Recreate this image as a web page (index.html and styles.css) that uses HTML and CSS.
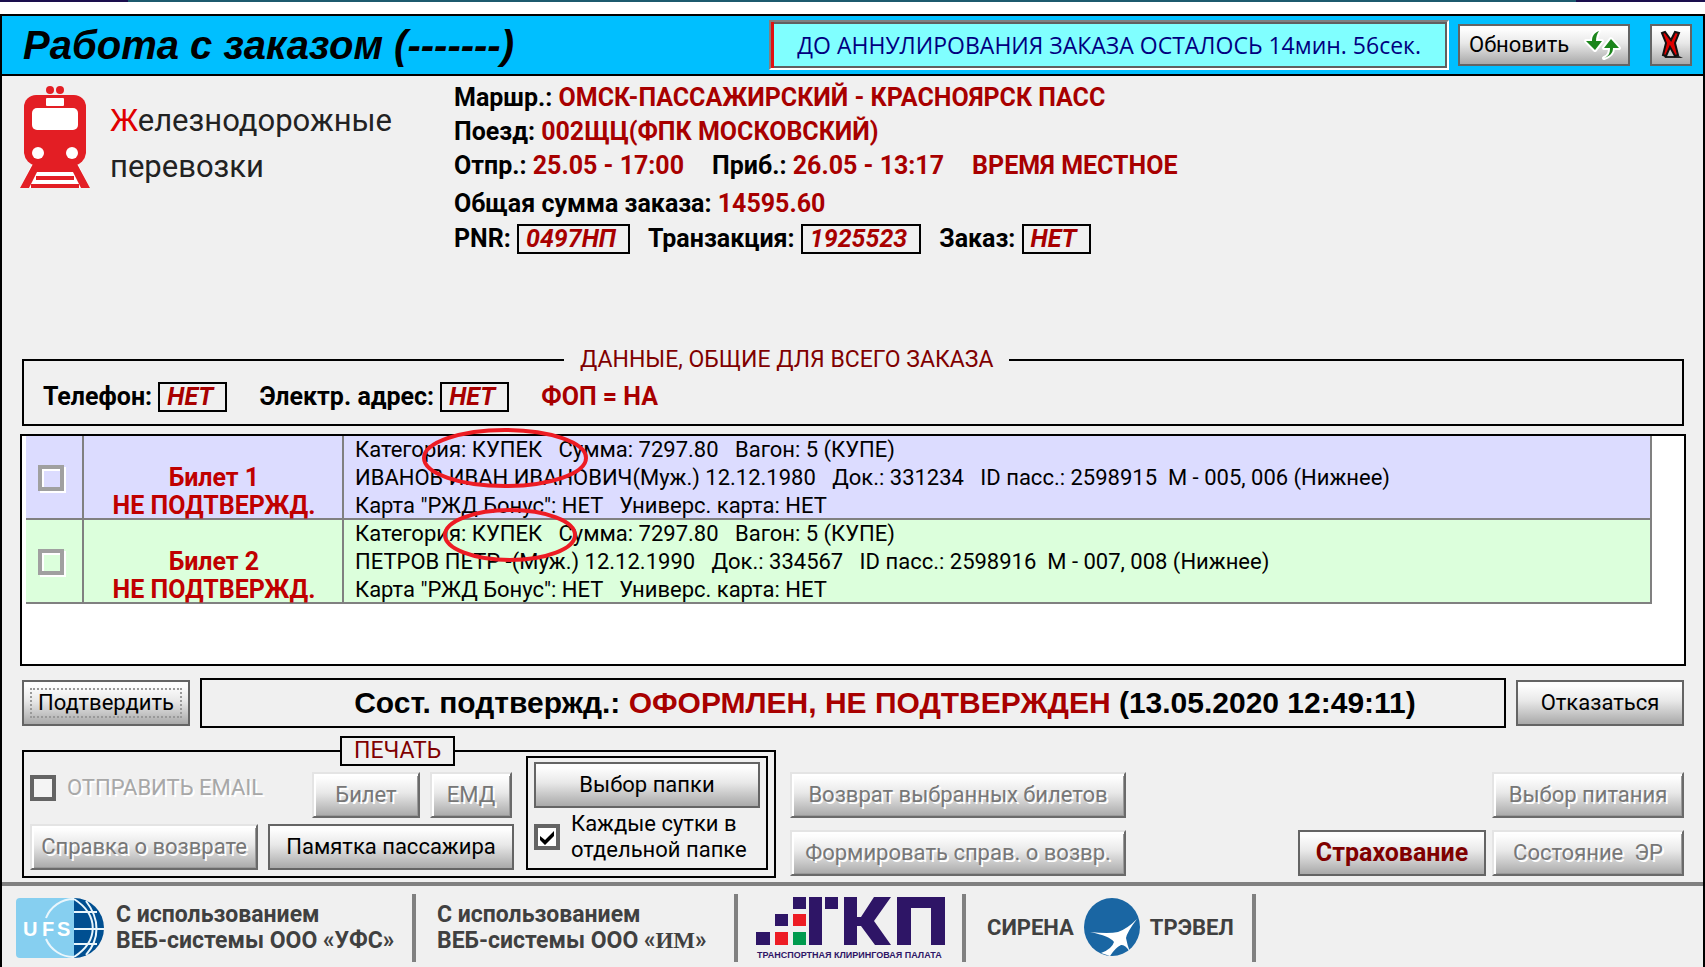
FILE: index.html
```html
<!DOCTYPE html>
<html lang="ru">
<head>
<meta charset="utf-8">
<title>Работа с заказом</title>
<link rel="stylesheet" href="styles.css">
</head>
<body>
<div class="strip"></div>
<main class="window">
  <header class="titlebar">
    <h1 class="title">Работа с заказом (-------)</h1>
    <output class="timer">ДО АННУЛИРОВАНИЯ ЗАКАЗА ОСТАЛОСЬ 14мин. 56сек.</output>
    <button class="btn refresh" type="button">Обновить
      <svg class="refresh-icon" width="34" height="32" viewBox="0 0 34 32" aria-hidden="true">
        <g fill="#1c861c" stroke="#fff" stroke-width="4" paint-order="stroke" stroke-linejoin="round">
          <path d="M14 2C9 4 7 7 7 12H1l9 9 7-9h-6c0-4 1-7 3-10z"/>
          <path d="M19 29c5-2 6-5 6-10h-6l7-9 8 9h-6c0 5-3 8-9 10z"/>
        </g>
      </svg>
    </button>
    <button class="btn close" type="button" aria-label="Закрыть">
      <svg width="24" height="30" viewBox="0 0 24 30" aria-hidden="true">
        <path d="M5 26h15l4 2H6z" fill="#222"/>
        <path d="M3 3l3-1 6 8 4-8 4 1-4 10 3 12-3 1-5-9-4 9-3-1 3-12z" fill="#e00000" stroke="#111" stroke-width="2"/>
      </svg>
    </button>
  </header>

  <section class="summary">
    <div class="brand">
      <svg class="train" width="70" height="102" viewBox="0 0 70 102" aria-hidden="true">
        <path d="M12 78h46l12 24H0z" fill="#fff"/>
        <g fill="#e31e24">
          <circle cx="30" cy="4" r="4"/><circle cx="40" cy="4" r="4"/>
          <path d="M16 9h38a12 12 0 0 1 12 12v46a15 15 0 0 1-12 13H16A15 15 0 0 1 4 67V21A12 12 0 0 1 16 9z"/>
          <path d="M14 76l6 4-11 22H0zM56 76l-6 4 11 22h9z"/>
          <path d="M17 78h36v8H17zM16 90h38v4H16zM11 98h48v4H11z"/>
        </g>
        <path d="M19 86l-2 4h36l-2-4z" fill="#fff"/>
        <g fill="#fff">
          <rect x="26" y="12" width="18" height="8" rx="1"/>
          <rect x="12" y="22" width="46" height="22" rx="5"/>
          <circle cx="18" cy="67" r="6"/><circle cx="52" cy="67" r="6"/>
        </g>
      </svg>
      <p class="brand-name"><span class="brand-cap">Ж</span>елезнодорожные<br>перевозки</p>
    </div>
    <div class="trip">
      <p>Маршр.: <b>ОМСК-ПАССАЖИРСКИЙ - КРАСНОЯРСК ПАСС</b></p>
      <p>Поезд: <b>002ЩЦ(ФПК МОСКОВСКИЙ)</b></p>
      <p class="times"><span>Отпр.: <b>25.05 - 17:00</b></span><span>Приб.: <b>26.05 - 13:17</b></span><b>ВРЕМЯ МЕСТНОЕ</b></p>
      <p>Общая сумма заказа: <b>14595.60</b></p>
      <p class="codes"><span>PNR: <b class="tag">0497НП</b></span><span>Транзакция: <b class="tag">1925523</b></span><span>Заказ: <b class="tag">НЕТ</b></span></p>
    </div>
  </section>

  <fieldset class="common">
    <legend>ДАННЫЕ, ОБЩИЕ ДЛЯ ВСЕГО ЗАКАЗА</legend>
    <div class="contacts">
      <span>Телефон: <b class="tag">НЕТ</b></span>
      <span>Электр. адрес: <b class="tag">НЕТ</b></span>
      <b>ФОП = НА</b>
    </div>
  </fieldset>

  <section class="grid">
    <table class="tickets">
      <tbody>
        <tr class="odd">
          <td class="pick"><input class="check pale" type="checkbox" aria-label="Билет 1"></td>
          <td class="state">Билет 1<br>НЕ ПОДТВЕРЖД.</td>
          <td class="info">Категория: КУПЕК   Сумма: 7297.80   Вагон: 5 (КУПЕ)<br>ИВАНОВ ИВАН ИВАНОВИЧ(Муж.) 12.12.1980   Док.: 331234   ID пасс.: 2598915  М - 005, 006 (Нижнее)<br>Карта "РЖД Бонус": НЕТ   Универс. карта: НЕТ</td>
        </tr>
        <tr class="even">
          <td class="pick"><input class="check pale" type="checkbox" aria-label="Билет 2"></td>
          <td class="state">Билет 2<br>НЕ ПОДТВЕРЖД.</td>
          <td class="info">Категория: КУПЕК   Сумма: 7297.80   Вагон: 5 (КУПЕ)<br>ПЕТРОВ ПЕТР -(Муж.) 12.12.1990   Док.: 334567   ID пасс.: 2598916  М - 007, 008 (Нижнее)<br>Карта "РЖД Бонус": НЕТ   Универс. карта: НЕТ</td>
        </tr>
      </tbody>
    </table>
    <svg class="marks" width="180" height="140" viewBox="0 0 180 140" aria-hidden="true">
      <g fill="none" stroke="#ed1c24" stroke-width="4">
        <ellipse cx="86" cy="33" rx="81" ry="28"/>
        <ellipse cx="91" cy="110" rx="65" ry="25"/>
      </g>
    </svg>
  </section>

  <section class="confirm">
    <button class="btn focused" type="button">Подтвердить</button>
    <p class="status">Сост. подтвержд.: <b>ОФОРМЛЕН, НЕ ПОДТВЕРЖДЕН</b> (13.05.2020 12:49:11)</p>
    <button class="btn" type="button">Отказаться</button>
  </section>

  <section class="actions">
    <fieldset class="print">
      <legend>ПЕЧАТЬ</legend>
      <div class="print-body">
        <div class="docs">
          <div class="docs-row">
            <label class="email"><input class="check" type="checkbox" disabled><span>ОТПРАВИТЬ EMAIL</span></label>
            <button class="btn ticket" type="button" disabled>Билет</button>
            <button class="btn emd" type="button" disabled>ЕМД</button>
          </div>
          <div class="docs-row">
            <button class="btn refund-note" type="button" disabled>Справка о возврате</button>
            <button class="btn memo" type="button">Памятка пассажира</button>
          </div>
        </div>
        <div class="folder">
          <button class="btn" type="button">Выбор папки</button>
          <label class="daily"><input class="check" type="checkbox" checked><span>Каждые сутки в<br>отдельной папке</span></label>
        </div>
      </div>
    </fieldset>
    <div class="refunds">
      <button class="btn" type="button" disabled>Возврат выбранных билетов</button>
      <button class="btn" type="button" disabled>Формировать справ. о возвр.</button>
    </div>
    <div class="extras">
      <button class="btn meal" type="button" disabled>Выбор питания</button>
      <button class="btn insure" type="button">Страхование</button>
      <button class="btn er" type="button" disabled>Состояние&nbsp; ЭР</button>
    </div>
  </section>

  <footer class="partners">
    <div class="partner ufs">
      <svg width="88" height="60" viewBox="0 0 88 60" role="img" aria-label="UFS">
        <rect width="62" height="60" rx="4" fill="#86cff0"/>
        <path d="M58 0a30 30 0 0 1 0 60z" fill="#004f91"/>
        <g fill="none" stroke="#e9f6fc" stroke-width="2">
          <path d="M30 20A30 30 0 0 1 58 1M30 41a30 30 0 0 0 28 18M58 31h30M58 14h23M58 46h23M58 1c25 16 25 42 0 58M70 3c14 18 14 38 0 54"/>
        </g>
        <g class="ufs-text"><text x="7" y="38">U</text><text x="26" y="38">F</text><text x="41" y="38">S</text></g>
      </svg>
      <p>С использованием<br>ВЕБ-системы ООО «УФС»</p>
    </div>
    <div class="partner im"><p>С использованием<br>ВЕБ-системы ООО «<span class="serif">ИМ</span>»</p></div>
    <div class="partner tkp">
      <svg width="190" height="64" viewBox="0 0 190 64" role="img" aria-label="ТКП. Транспортная клиринговая палата">
        <path d="M37 1h13v12H37zM19 18h13v12H19zM0 36h14v13H0zM53 1h13v48H53zM69 1h13v12H69zM88 1h13v20h4L118 1h17l-17 24 17 24h-16L105 30h-4v19H88zM141 1h48v48h-14V12h-20v37h-14z" fill="#2e1566"/>
        <path d="M37 18h13v12H37zM19 36h13v13H19z" fill="#ed1c24"/>
        <path d="M37 36h13v13H37z" fill="#009a4e"/>
        <text class="tkp-text" x="1" y="62">ТРАНСПОРТНАЯ КЛИРИНГОВАЯ ПАЛАТА</text>
      </svg>
    </div>
    <div class="partner sirena">
      <span>СИРЕНА</span>
      <svg width="58" height="60" viewBox="0 0 58 60" aria-hidden="true">
        <ellipse cx="29" cy="29" rx="28" ry="29" fill="#1a66a3"/>
        <path d="M54 21Q44 34 43 40Q44 46 47 54Q42 46 38 47Q32 50 27 58L18 55Q29 51 31 44Q27 38 7 34Q26 36 35 34Q44 31 54 21z" fill="#fff"/>
      </svg>
      <span>ТРЭВЕЛ</span>
    </div>
  </footer>
</main>
</body>
</html>
```
FILE: styles.css
```css
* { box-sizing: border-box; }

body {
  margin: 0;
  min-height: 100vh;
  display: flex;
  flex-direction: column;
  background: #fff;
  color: #000;
  font: 22px/28px Roboto, "Liberation Sans", sans-serif;
}

h1, p, fieldset { margin: 0; }
b { font-weight: inherit; color: #a80000; }

.strip {
  height: 14px;
  background: linear-gradient(90deg, #1a0e4e 128px, #1c5a6e 128px calc(100% - 129px), #1a0e4e 0) no-repeat;
  background-size: 100% 2px;
}

.window {
  flex: 1;
  display: flex;
  flex-direction: column;
  border: 2px solid #000;
  border-bottom: 0;
  background: #f0f0f0;
}

.titlebar {
  display: flex;
  align-items: center;
  height: 60px;
  padding: 0 11px 0 21px;
  border-bottom: 2px solid #000;
  background: #00bfff;
}
.title {
  margin-right: auto;
  font: italic bold 40px/44px "Liberation Sans", sans-serif;
}
.timer {
  padding: 0 26px;
  border: 2px solid;
  border-color: #808080 #fff #fff #808080;
  box-shadow: inset 3px 0 #e01010, inset 0 2px #606060, inset -2px -2px #606060;
  background: #80ffff;
  color: #000080;
  font: 23px/46px "Open Sans", "Noto Sans", sans-serif;
}

.btn {
  height: 46px;
  padding: 0;
  border: 2px solid #646464;
  background: linear-gradient(#fdfdfd 10%, #e8e8e8 45%, #a9a9a9);
  color: #000;
  font: inherit;
  white-space: nowrap;
}
.btn:disabled {
  border-color: #e4e4e4 #6a6a6a #6a6a6a #e4e4e4;
  box-shadow: inset 2px 2px #fff, inset -1px -1px #999;
  color: #777;
  text-shadow: 2px 2px #fff;
}
.refresh {
  display: flex;
  align-items: center;
  justify-content: space-between;
  width: 172px;
  height: 42px;
  margin: 0 20px 0 9px;
  padding: 0 9px;
}
.refresh-icon { overflow: visible; }
.close {
  display: flex;
  align-items: center;
  justify-content: center;
  width: 42px;
  height: 42px;
}

.summary {
  display: flex;
  height: 270px;
  padding-left: 18px;
}
.brand {
  display: flex;
  gap: 20px;
  width: 434px;
  padding-top: 10px;
}
.train { flex: none; }
.brand-name {
  padding-top: 12px;
  color: #222;
  font-size: 31px;
  line-height: 46px;
}
.brand-cap { color: #e00000; }
.trip {
  display: flex;
  flex-direction: column;
  gap: 6px;
  padding-top: 8px;
  font-size: 25px;
  font-weight: bold;
  white-space: nowrap;
}
.times, .codes { display: flex; }
.times { gap: 28px; margin-bottom: 4px; }
.codes { gap: 18px; }
.tag {
  display: inline-block;
  padding: 0 12px 0 7px;
  border: 2px solid #000;
  font-style: italic;
  line-height: 26px;
}

.common {
  margin: 0 19px 8px 20px;
  padding: 8px 20px 12px 19px;
  border: 2px solid #000;
}
.common legend {
  margin-left: 521px;
  padding: 0 16px;
  color: #800000;
  font-size: 23px;
}
.contacts {
  display: flex;
  gap: 32px;
  align-items: center;
  font-size: 25px;
  font-weight: bold;
  white-space: nowrap;
}

.grid {
  position: relative;
  height: 232px;
  margin: 0 17px 12px 18px;
  padding-left: 4px;
  border: 2px solid #000;
  background: #fff;
}
.tickets { width: calc(100% - 32px); border-collapse: collapse; }
.tickets td { height: 84px; padding: 0; box-shadow: inset -2px -2px #808080; }
.odd { background: #dcdcff; }
.even { background: #dcffdc; }
.pick { width: 58px; text-align: center; vertical-align: middle; }
.tickets .state {
  width: 260px;
  color: #c00000;
  font-size: 25px;
  font-weight: bold;
  text-align: center;
  vertical-align: bottom;
}
.tickets .info { padding-left: 11px; white-space: pre; }
.marks { position: absolute; left: 397px; top: -11px; }

.check {
  appearance: none;
  flex: none;
  display: block;
  width: 26px;
  height: 26px;
  margin: 0;
  border: 4px solid #646464;
  background: #f4f4f4;
}
.check:checked {
  background: #fff url("data:image/svg+xml,%3Csvg xmlns='http://www.w3.org/2000/svg' viewBox='0 0 18 18'%3E%3Cpath d='M2 8l5 4 9-9v5l-9 9-5-5z'/%3E%3C/svg%3E");
}
.pale { margin: 0 auto 0 12px; border-color: #a0a0a0; background: transparent; box-shadow: 2px 2px #fff, inset 2px 2px #fff; }

.confirm { display: flex; align-items: center; gap: 10px; padding: 0 19px 0 20px; }
.confirm .btn { width: 168px; }
.focused { outline: 2px dotted #999; outline-offset: -10px; }
.status {
  flex: 1;
  padding-left: 64px;
  border: 2px solid #000;
  font: bold 30px/46px "Liberation Sans", sans-serif;
  text-align: center;
}

.actions { display: flex; margin: 8px 19px 4px 20px; }
.print { padding: 0 6px 6px; border: 2px solid #000; }
.print legend {
  margin-left: 310px;
  padding: 0 12px;
  border: 2px solid #000;
  color: #800000;
  font-size: 23px;
  line-height: 26px;
}
.print-body { display: flex; gap: 12px; margin-top: -10px; }
.docs { display: flex; flex-direction: column; justify-content: flex-end; gap: 6px; }
.docs-row { display: flex; gap: 10px; }
.email { display: flex; align-items: center; gap: 11px; width: 272px; height: 32px; color: #a8a8a8; text-shadow: 2px 2px #fff; white-space: nowrap; }
.ticket { width: 108px; }
.emd { width: 82px; }
.refund-note { width: 228px; }
.memo { width: 246px; }
.folder { width: 242px; min-height: 114px; padding: 4px 6px; border: 2px solid #000; }
.folder .btn { display: block; width: 100%; }
.daily { display: flex; align-items: center; gap: 11px; padding-top: 3px; line-height: 26px; white-space: nowrap; }
.refunds { display: grid; align-content: end; gap: 12px; width: 336px; margin: 0 auto 2px 14px; }
.extras { display: grid; grid-template-columns: 188px 192px; align-content: end; gap: 12px 6px; margin-bottom: 2px; }
.meal { grid-column: 2; }
.insure { color: #800000; font-size: 25px; font-weight: bold; }

.partners {
  display: flex;
  flex: 1;
  align-items: flex-start;
  padding: 8px 0 0 14px;
  border-top: 4px solid #808080;
  color: #404040;
  font-size: 23px;
  font-weight: bold;
  line-height: 26px;
  white-space: nowrap;
}
.partner { display: flex; align-items: center; height: 68px; border-right: 4px solid #808080; }
.ufs { flex: 0 0 400px; gap: 12px; }
.im { flex: 0 0 322px; padding-left: 21px; }
.tkp { flex: 0 0 228px; padding-left: 18px; }
.sirena { flex: 0 0 290px; gap: 9px; padding-left: 21px; font-size: 22px; }
.serif { font-family: "Liberation Serif", serif; }
.ufs-text { fill: #fff; font: bold 20px "Liberation Sans", sans-serif; }
.tkp-text { fill: #2e1566; font: bold 9px "Liberation Sans", sans-serif; }
```
